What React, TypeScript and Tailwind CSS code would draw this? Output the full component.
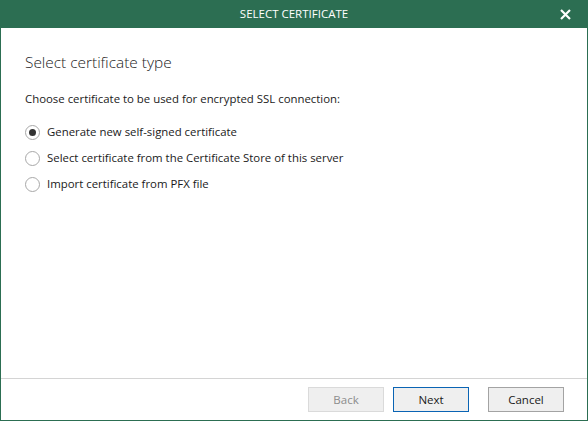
import React from 'react';

const options = [
  'Generate new self-signed certificate',
  'Select certificate from the Certificate Store of this server',
  'Import certificate from PFX file',
];

export default function App() {
  const [selected, setSelected] = React.useState(0);

  return (
    <div
      className="w-[588px] h-[421px] flex flex-col bg-white border-x border-b border-[#2c6e52] text-[#1a1a1a]"
      style={{ fontFamily: '"Segoe UI", "Open Sans", sans-serif' }}
    >
      {/* title bar */}
      <div className="relative h-[28px] -mx-px flex items-center justify-center bg-[#2c6e52] text-white text-[11.5px]">
        <span>SELECT CERTIFICATE</span>
        <button className="absolute right-[17px] top-[8px] w-[12px] h-[12px] flex items-center justify-center">
          <svg width="11" height="11" viewBox="0 0 11 11">
            <path d="M1 1 L10 10 M10 1 L1 10" stroke="white" strokeWidth="2.2" />
          </svg>
        </button>
      </div>

      <div className="flex-1 px-[24px] pt-[25px]">
        <h1 className="text-[15.4px] leading-[20px] font-light text-[#222]">Select certificate type</h1>
        <p className="mt-[18px] text-[11.4px] leading-[16px]">
          Choose certificate to be used for encrypted SSL connection:
        </p>
        <div className="mt-[17px] flex flex-col gap-[10px]">
          {options.map((label, i) => (
            <label key={i} className="flex items-center gap-[7px] h-[16px] text-[11.4px] cursor-pointer" onClick={() => setSelected(i)}>
              <span className="w-[15px] h-[15px] rounded-full border border-[#a8a8a8] bg-white flex items-center justify-center">
                {selected === i && <span className="w-[7px] h-[7px] rounded-full bg-[#333]" />}
              </span>
              <span>{label}</span>
            </label>
          ))}
        </div>
      </div>

      {/* footer */}
      <div className="h-[42px] border-t border-[#d4d4d4] flex items-center justify-end pr-[23px] text-[11.5px]">
        <button className="w-[76px] h-[25px] bg-[#efefef] border border-[#dadada] text-[#8c8c8c]">Back</button>
        <button className="ml-[9px] w-[76px] h-[25px] bg-[#efefef] border border-[#0a64b4]">Next</button>
        <button className="ml-[19px] w-[76px] h-[25px] bg-[#efefef] border border-[#a3a3a3]">Cancel</button>
      </div>
    </div>
  );
}
